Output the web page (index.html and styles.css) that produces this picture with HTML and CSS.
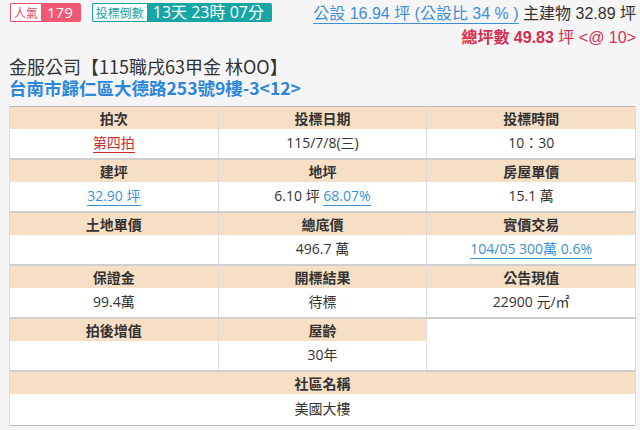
FILE: index.html
```html
<!DOCTYPE html>
<html lang="zh-Hant">
<head>
<meta charset="utf-8">
<link rel="stylesheet" href="styles.css">
</head>
<body>
<div class="page">
  <div class="top">
    <div class="badges">
      <span class="badge pink"><span class="lbl">人氣</span><span class="val">179</span></span>
      <span class="badge teal"><span class="lbl">投標倒數</span><span class="val">13天 23時 07分</span></span>
    </div>
    <div class="area">
      <div class="line1"><a class="link">公設 16.94 坪 (公設比 34 % )</a> 主建物 32.89 坪</div>
      <div class="line2"><b>總坪數 49.83</b> 坪 &lt;@ 10&gt;</div>
    </div>
  </div>
  <div class="title">金服公司【115職戌63甲金 林OO】</div>
  <div class="addr">台南市歸仁區大德路253號9樓-3&lt;12&gt;</div>
  <table class="info">
    <tr class="h"><th>拍次</th><th>投標日期</th><th>投標時間</th></tr>
    <tr class="v"><td><a class="red">第四拍</a></td><td>115/7/8(三)</td><td>10：30</td></tr>
    <tr class="h"><th>建坪</th><th>地坪</th><th>房屋單價</th></tr>
    <tr class="v"><td><a class="link">32.90 坪</a></td><td>6.10 坪 <a class="link">68.07%</a></td><td>15.1 萬</td></tr>
    <tr class="h"><th>土地單價</th><th>總底價</th><th>實價交易</th></tr>
    <tr class="v"><td></td><td>496.7 萬</td><td><a class="link">104/05 300萬 0.6%</a></td></tr>
    <tr class="h"><th>保證金</th><th>開標結果</th><th>公告現值</th></tr>
    <tr class="v"><td>99.4萬</td><td>待標</td><td>22900 元/㎡</td></tr>
    <tr class="h"><th>拍後增值</th><th>屋齡</th><th rowspan="2" class="blank"></th></tr>
    <tr class="v"><td></td><td>30年</td></tr>
    <tr class="h"><th colspan="3">社區名稱</th></tr>
    <tr class="v last"><td colspan="3">美國大樓</td></tr>
  </table>
</div>
</body>
</html>
```

FILE: styles.css
```css
html, body {
  margin: 0;
  padding: 0;
  background: #f5f5f5;
}
body {
  font-family: "Open Sans", "Noto Sans CJK TC", sans-serif;
  color: #333;
}
.page {
  padding: 3px 4px 0 9px;
}
.top {
  display: flex;
  justify-content: space-between;
  align-items: flex-start;
  height: 52px;
}
.badges {
  display: flex;
  gap: 11px;
  padding-left: 1px;
}
.badge {
  display: inline-flex;
  height: 19px;
  font-family: "Noto Sans CJK TC", sans-serif;
}
.badge .lbl {
  background: #fff;
  font-size: 12px;
  line-height: 17px;
  padding: 0 3px;
  border: 1px solid;
  border-right: none;
  border-radius: 2px 0 0 2px;
}
.badge .val {
  color: #fff;
  font-family: "Open Sans", "Noto Sans CJK TC", sans-serif;
  font-size: 15px;
  line-height: 19px;
  border-radius: 0 2px 2px 0;
}
.pink .lbl { color: #e8506e; border-color: #e8506e; }
.pink .val { background: #f15873; padding: 0 8px 0 6px; }
.teal .lbl { color: #17a3a3; border-color: #17a3a3; }
.teal .val { background: #17a5a5; padding: 0 8px 0 6px; font-size: 16px; }
.area {
  text-align: right;
  font-size: 16px;
  font-family: "Liberation Sans", "Noto Sans CJK TC", sans-serif;
}
.line1 {
  line-height: 22px;
  color: #333;
}
.line2 {
  line-height: 22px;
  margin-top: 2px;
  color: #d42f52;
}
.line2 b { font-weight: bold; }
.link {
  color: #3d8fd6;
  text-decoration: none;
  border-bottom: 1.5px solid #3d8fd6;
}
.area .link {
  border-bottom: 1px solid #3d8fd6;
  padding-bottom: 1px;
}
.red {
  color: #c9302c;
  text-decoration: none;
  border-bottom: 1.5px solid #c9302c;
}
.title {
  font-size: 18px;
  line-height: 22px;
  color: #333;
  font-family: "Noto Sans CJK TC", sans-serif;
}
.addr {
  font-size: 17.5px;
  line-height: 22px;
  color: #2c86dc;
  font-weight: bold;
  font-family: "Noto Sans CJK TC", sans-serif;
  margin-bottom: 7px;
}
.info {
  width: 627px;
  border-collapse: collapse;
  table-layout: fixed;
  border: 1px solid #b8b8b8;
  background: #fff;
  font-size: 14px;
  font-family: "Open Sans", "Noto Sans CJK TC", sans-serif;
}
.info th, .info td {
  text-align: center;
  padding: 0;
  border-left: 1px solid #dcdcdc;
  border-right: 1px solid #dcdcdc;
}
.info th {
  background: #f6dfc4;
  font-weight: bold;
  height: 22px;
  line-height: 22px;
  color: #333;
  font-family: "Noto Sans CJK TC", sans-serif;
}
.info th.blank {
  background: #fff;
  border-bottom: 2px solid #ccc;
}
.info td {
  height: 28px;
  line-height: 20px;
  padding-bottom: 1px;
  color: #333;
}
.info tr.v td {
  border-bottom: 2px solid #cfcfcf;
}
.info tr.last td {
  border-bottom: none;
  height: 30px;
}
```
